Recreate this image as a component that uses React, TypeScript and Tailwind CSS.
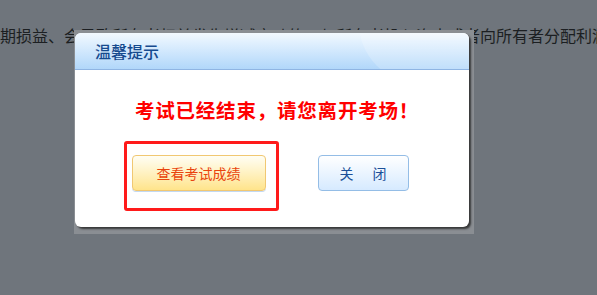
export default function App() {
  return (
    <div
      className="relative h-[295px] w-[597px] overflow-hidden bg-[#6f757c]"
      style={{ fontFamily: '"Noto Sans CJK SC", "Liberation Sans", sans-serif' }}
    >
      <p className="whitespace-nowrap pt-[25px] text-[16px] leading-[20px] text-[#1c1f22]">
        期损益、会导致所有者权益发生增减变动的、与所有者投入资本或者向所有者分配利润无关的
      </p>

      {/* modal */}
      <div className="absolute left-[74px] top-[30px] h-[204px] w-[400px] bg-[#8a8e93]">
        <div className="ml-px mt-[3px] flex h-[194px] w-[394px] flex-col rounded-[6px] bg-white shadow-[2px_2px_2px_rgba(40,40,40,0.85)]">
          <div className="relative flex h-[37px] items-center overflow-hidden rounded-t-[6px] border-b border-[#8fb5e3] bg-gradient-to-b from-[#f2f9ff] to-[#b1d7fa] pl-[20px]">
            <div className="absolute -right-[40px] -top-[70px] h-[120px] w-[150px] rounded-full bg-white/20" />
            <span className="relative text-[16px] font-medium leading-none text-[#164a8e]">温馨提示</span>
          </div>

          <div className="flex flex-1 flex-col items-center pr-[4px]">
            <p className="ml-[14px] mt-[30px] text-[19.5px] font-bold leading-[20px] tracking-[0.8px] text-[#ff0000]">
              考试已经结束，请您离开考场！
            </p>
            <div className="mt-[35px] flex items-center gap-[52px]">
              <div className="relative">
                <button className="flex h-[36px] w-[134px] items-center justify-center rounded-[4px] border border-[#f1c872] bg-gradient-to-b from-[#fffef4] to-[#ffe48a] text-[14px] text-[#e9430c] shadow-[0_1px_0_#c3d9f2]">
                  查看考试成绩
                </button>
                <div className="absolute -left-[8px] -top-[14px] h-[70px] w-[155px] rounded-[3px] border-[3px] border-[#ff1a1a]" />
              </div>
              <button className="flex h-[36px] w-[91px] items-center justify-center rounded-[4px] border border-[#94bde6] bg-gradient-to-b from-[#ffffff] to-[#d6eaff] text-[14px] text-[#1b4f98]">
                关<span className="inline-block w-[19px]" />闭
              </button>
            </div>
          </div>
        </div>
      </div>
    </div>
  );
}
